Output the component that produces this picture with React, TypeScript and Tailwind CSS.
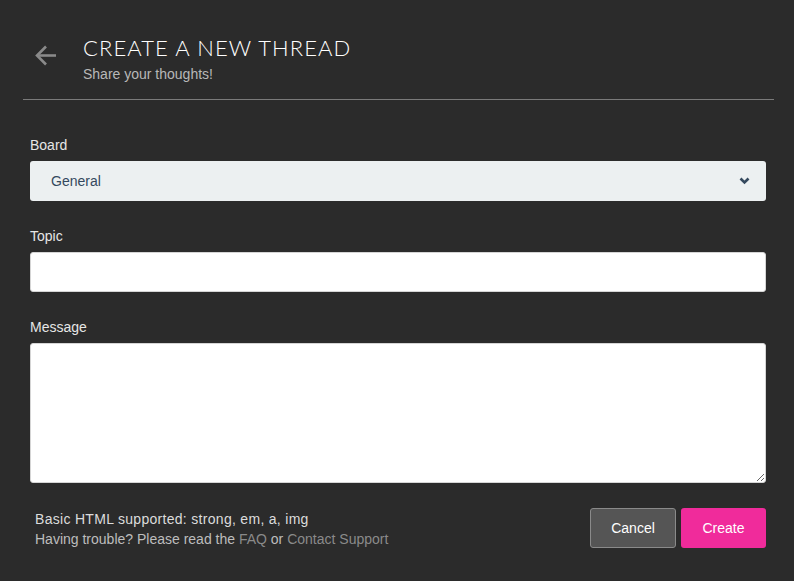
import React from "react";

export default function App() {
  return (
    <div className="min-h-[581px] w-full bg-[#2b2b2b] pl-[23px] pr-[20px] pt-[34px]" style={{ fontFamily: '"Liberation Sans", Arial, sans-serif' }}>
      <div className="flex items-start">
        <div className="w-[60px] pl-[12px] pt-[11px]">
          <svg width="22" height="21" viewBox="0 0 22 21" fill="none" stroke="#8a8a8a" strokeWidth="2.6" strokeLinecap="butt" strokeLinejoin="miter">
            <path d="M21 10.5H3" />
            <path d="M11 1.5L2 10.5L11 19.5" />
          </svg>
        </div>
        <div>
          <h1 className="text-[22px] leading-[28px] text-white tracking-[1.1px]" style={{ fontFamily: 'Lato, "Open Sans", sans-serif', fontWeight: 300 }}>CREATE A NEW THREAD</h1>
          <p className="mt-[4px] text-[14px] leading-[17px] text-[#b8b8b8]">Share your thoughts!</p>
        </div>
      </div>
      <div className="mt-[16px] h-px bg-[#7a7a7a]" />
      <form className="pl-[7px] pr-[8px] pt-[35px]" onSubmit={(e) => e.preventDefault()}>
        <label className="block text-[14px] leading-[20px] text-[#e6e6e6]">Board</label>
        <div className="relative mt-[6px] h-[40px] rounded-[3px] bg-[#ecf0f1]">
          <div className="flex h-full items-center pl-[21px] text-[14px] text-[#34495e]">General</div>
          <svg className="absolute right-[16px] top-[16px]" width="11" height="8" viewBox="0 0 11 8" fill="none" stroke="#34495e" strokeWidth="2.6">
            <path d="M1.5 1.5L5.5 5.5L9.5 1.5" />
          </svg>
        </div>
        <label className="mt-[25px] block text-[14px] leading-[20px] text-[#e6e6e6]">Topic</label>
        <input className="mt-[6px] block h-[40px] w-full rounded-[3px] border border-[#d5d5d5] bg-white px-3 text-[14px] outline-none" />
        <label className="mt-[25px] block text-[14px] leading-[20px] text-[#e6e6e6]">Message</label>
        <textarea className="mt-[6px] block h-[140px] w-full rounded-[3px] border border-[#d5d5d5] bg-white px-3 py-2 text-[14px] outline-none" />
        <div className="mt-[25px] flex items-start justify-between">
          <div className="pl-[5px] pt-[1px] text-[14px] leading-[20px]">
            <p className="text-[#dcdcdc] tracking-[0.3px]">Basic HTML supported: strong, em, a, img</p>
            <p className="text-[#bdbdbd]">
              Having trouble? Please read the <a className="text-[#8a8a8a]">FAQ</a> or <a className="text-[#8a8a8a]">Contact Support</a>
            </p>
          </div>
          <div className="flex gap-[5px]">
            <button type="button" className="h-[40px] w-[86px] rounded-[3px] border border-[#8a8a8a] bg-[#555555] text-[14px] text-white">Cancel</button>
            <button type="submit" className="h-[40px] w-[85px] rounded-[3px] bg-[#f02b9b] text-[14px] text-white">Create</button>
          </div>
        </div>
      </form>
    </div>
  );
}
